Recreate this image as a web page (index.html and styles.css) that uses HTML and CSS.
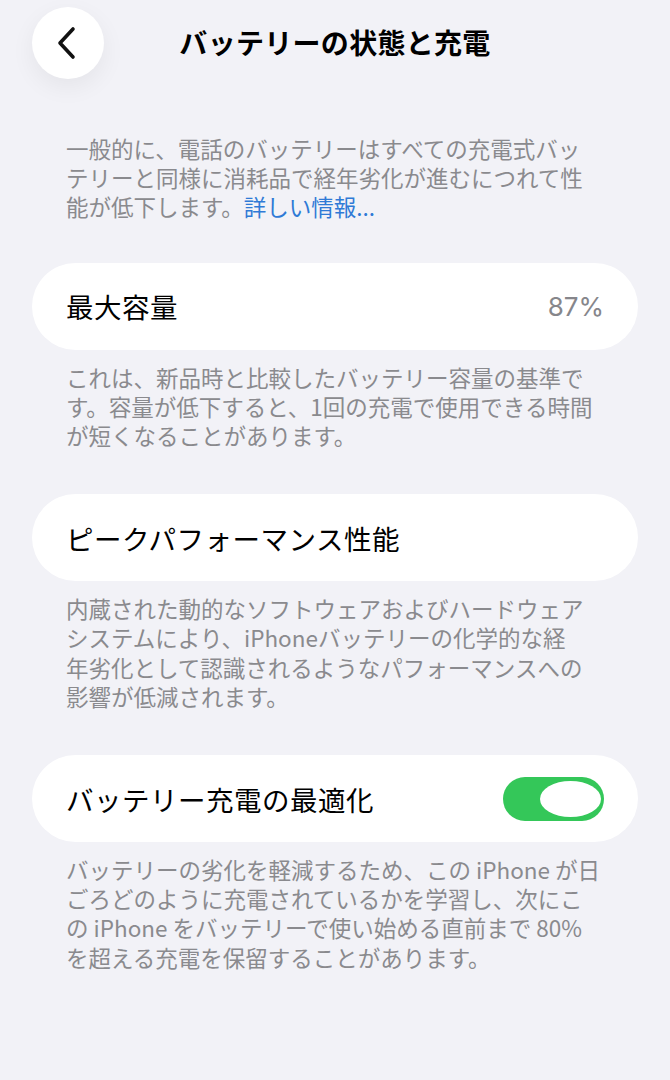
FILE: index.html
```html
<!DOCTYPE html>
<html lang="ja">
<head>
  <meta charset="utf-8">
  <title>バッテリーの状態と充電</title>
  <link rel="stylesheet" href="styles.css">
</head>
<body>
  <div class="screen">
    <header class="nav-bar">
      <button class="back-btn" aria-label="戻る">
        <svg width="22" height="34" viewBox="0 0 22 34">
          <path d="M18 3 L5 17 L18 31" fill="none" stroke="#111" stroke-width="3.6" stroke-linecap="round" stroke-linejoin="round"/>
        </svg>
      </button>
      <h1 class="nav-title">バッテリーの状態と充電</h1>
    </header>

    <p class="note intro">
      一般的に、電話のバッテリーはすべての充電式バッ<br>テリーと同様に消耗品で経年劣化が進むにつれて性<br>能が低下します。<a href="#" class="more-link">詳しい情報...</a>
    </p>

    <section class="group">
      <div class="cell">
        <span class="cell-label">最大容量</span>
        <span class="cell-value">87%</span>
      </div>
      <p class="note">
        これは、新品時と比較したバッテリー容量の基準で<br>す。容量が低下すると、1回の充電で使用できる時間<br>が短くなることがあります。
      </p>
    </section>

    <section class="group">
      <div class="cell">
        <span class="cell-label">ピークパフォーマンス性能</span>
      </div>
      <p class="note">
        内蔵された動的なソフトウェアおよびハードウェア<br>システムにより、iPhoneバッテリーの化学的な経<br>年劣化として認識されるようなパフォーマンスへの<br>影響が低減されます。
      </p>
    </section>

    <section class="group">
      <div class="cell">
        <span class="cell-label">バッテリー充電の最適化</span>
        <span class="switch on"><span class="knob"></span></span>
      </div>
      <p class="note">
        バッテリーの劣化を軽減するため、この iPhone が日<br>ごろどのように充電されているかを学習し、次にこ<br>の iPhone をバッテリーで使い始める直前まで 80%<br>を超える充電を保留することがあります。
      </p>
    </section>
  </div>
</body>
</html>
```

FILE: styles.css
```css
body {
  margin: 0;
  background-color: #f2f2f7;
  font-family: "Noto Sans CJK JP", "Noto Sans", sans-serif;
  color: #000;
}

.screen {
  padding: 0 32px;
}

.nav-bar {
  display: grid;
  grid-template-columns: 72px 1fr 72px;
  align-items: center;
  padding-top: 7px;
  height: 72px;
}

.back-btn {
  width: 72px;
  height: 72px;
  border: none;
  border-radius: 50%;
  background-color: #fff;
  box-shadow: 0 8px 24px rgba(0, 0, 0, 0.06);
  display: flex;
  align-items: center;
  justify-content: center;
  padding: 0 4px 0 0;
  cursor: pointer;
}

.nav-title {
  margin: 0 0 3px;
  text-align: center;
  font-size: 28px;
  font-weight: 700;
  line-height: 1;
  letter-spacing: 0.3px;
}

.note {
  margin: 0;
  padding: 0 34px;
  font-size: 22.5px;
  line-height: 29.2px;
  color: #8a8a8e;
}

.intro {
  margin-top: 55px;
  margin-bottom: 41px;
}

.more-link {
  color: #2f7ad6;
  text-decoration: none;
}

.group {
  margin-bottom: 44px;
}

.group .note {
  margin-top: 13px;
}

.cell {
  height: 87px;
  border-radius: 44px;
  background-color: #fff;
  display: flex;
  align-items: center;
  justify-content: space-between;
  padding: 0 34px;
}

.cell-label {
  font-size: 27.5px;
  letter-spacing: 0.5px;
}

.cell-value {
  font-family: "Inter", "Liberation Sans", sans-serif;
  font-size: 26px;
  color: #86868b;
}

.switch {
  position: relative;
  width: 101px;
  height: 44px;
  border-radius: 22px;
  background-color: #34c759;
}

.switch .knob {
  position: absolute;
  top: 4px;
  right: 3px;
  width: 61px;
  height: 36px;
  border-radius: 50%;
  background-color: #fff;
}
```
